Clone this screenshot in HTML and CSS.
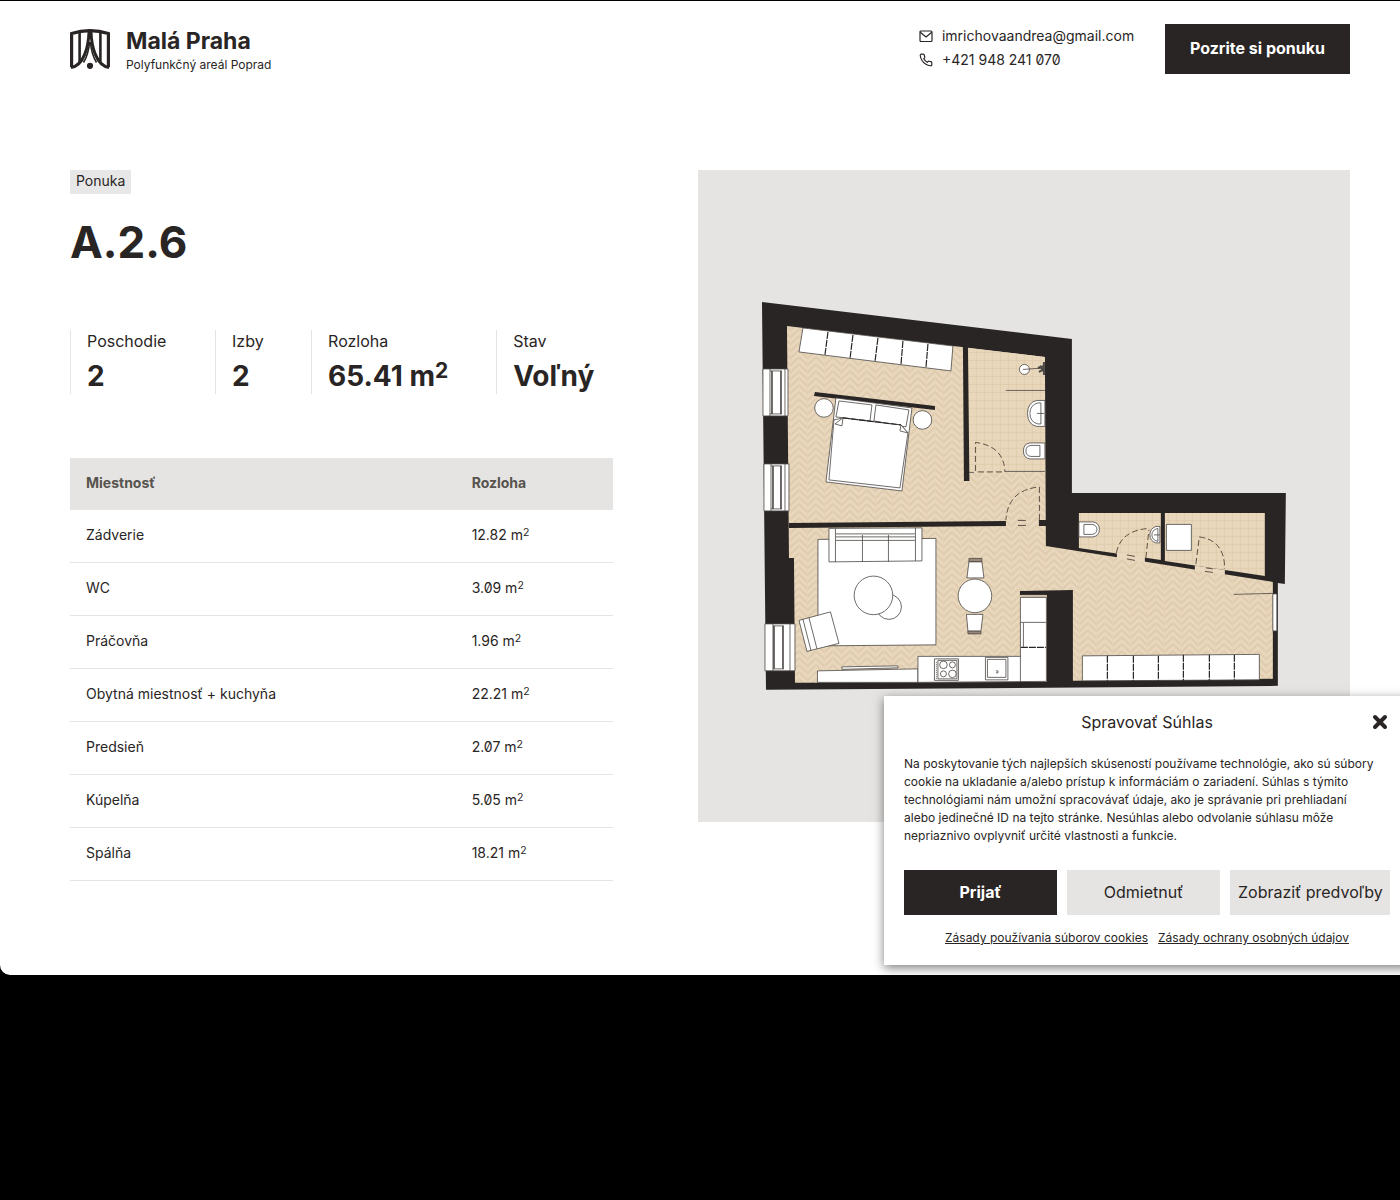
FILE: index.html
```html
<!DOCTYPE html>
<html lang="sk">
<head>
<meta charset="utf-8">
<meta name="viewport" content="width=device-width, initial-scale=1">
<title>A.2.6 – Malá Praha</title>
<link rel="stylesheet" href="styles.css">
</head>
<body>
<div class="page">
  <header class="header">
    <a class="brand" href="#">
      <svg class="brand-logo" viewBox="0 0 40 40" aria-hidden="true">
        <g fill="none" stroke="#292524">
          <path d="M1.6 38.3V4.6Q20-1.4 38.4 4.6v33.7" stroke-width="3.2"/>
          <path d="M9.6 3.5V33M30.4 3.5V33" stroke-width="2.600"/>
          <path d="M19 3C18.500 17 14 37 1 38.400M21 3C21.500 17 26 37 39 38.400" stroke-width="3"/>
          <path d="M19.600 13C18.800 22 17 28 13.500 33.500M20.400 13C21.200 22 23 28 26.500 33.500" stroke-width="1.600"/>
        </g>
        <circle cx="20" cy="36.800" r="3.100" fill="#292524"/>
      </svg>
      <span class="brand-text">
        <strong class="brand-name">Malá Praha</strong>
        <span class="brand-sub">Polyfunkčný areál Poprad</span>
      </span>
    </a>
    <div class="header-side">
      <address class="contact">
        <a class="contact-row" href="mailto:imrichovaandrea@gmail.com">
          <svg class="icon" viewBox="0 0 14 14" aria-hidden="true"><rect x="1" y="2" width="12" height="10.500" rx="1"/><path d="M1.200 3.200 7 8l5.800-4.800"/></svg>
          imrichovaandrea@gmail.com
        </a>
        <a class="contact-row" href="tel:+421948241070">
          <svg class="icon" viewBox="0 0 24 24" aria-hidden="true"><path class="phone" d="M22 16.920v3a2 2 0 0 1-2.180 2 19.790 19.790 0 0 1-8.630-3.070 19.500 19.500 0 0 1-6-6 19.790 19.790 0 0 1-3.070-8.670A2 2 0 0 1 4.110 2h3a2 2 0 0 1 2 1.720c.127.960.361 1.903.7 2.810a2 2 0 0 1-.45 2.110L8.090 9.910a16 16 0 0 0 6 6l1.270-1.270a2 2 0 0 1 2.110-.45c.907.339 1.850.573 2.810.7A2 2 0 0 1 22 16.920z"/></svg>
          +421 948 241 070
        </a>
      </address>
      <button class="btn btn-dark btn-offer" type="button">Pozrite si ponuku</button>
    </div>
  </header>

  <main class="main">
    <section class="details">
      <span class="tag">Ponuka</span>
      <h1 class="title">A.2.6</h1>
      <dl class="stats">
        <div class="stat"><dt>Poschodie</dt><dd>2</dd></div>
        <div class="stat"><dt>Izby</dt><dd>2</dd></div>
        <div class="stat"><dt>Rozloha</dt><dd>65.41 m<sup>2</sup></dd></div>
        <div class="stat"><dt>Stav</dt><dd>Voľný</dd></div>
      </dl>
      <table class="rooms">
        <thead><tr><th scope="col">Miestnosť</th><th scope="col">Rozloha</th></tr></thead>
        <tbody>
          <tr><td>Zádverie</td><td>12.82 m<sup>2</sup></td></tr>
          <tr><td>WC</td><td>3.09 m<sup>2</sup></td></tr>
          <tr><td>Práčovňa</td><td>1.96 m<sup>2</sup></td></tr>
          <tr><td>Obytná miestnosť + kuchyňa</td><td>22.21 m<sup>2</sup></td></tr>
          <tr><td>Predsieň</td><td>2.07 m<sup>2</sup></td></tr>
          <tr><td>Kúpelňa</td><td>5.05 m<sup>2</sup></td></tr>
          <tr><td>Spálňa</td><td>18.21 m<sup>2</sup></td></tr>
        </tbody>
      </table>
    </section>

    <figure class="plan">
      <svg viewBox="698 170 652 652" role="img" aria-label="Pôdorys bytu A.2.6">
        <defs>
          <pattern id="parquet" width="17" height="7" patternUnits="userSpaceOnUse">
            <rect width="17" height="7" fill="#e9d8be"/>
            <path d="M0-7 8.500 1.500 17-7M0 0 8.500 8.500 17 0M0 7 8.500 15.500 17 7" fill="none" stroke="#e0ccae" stroke-width="2.200"/>
            <path d="M8.500 0V7M0 0V7" stroke="#e4d2b6" stroke-width=".8"/>
          </pattern>
          <pattern id="tile" width="8" height="8" patternUnits="userSpaceOnUse">
            <rect width="8" height="8" fill="#e9d7bc"/>
            <path d="M0 .5H8M.5 0V8" stroke="#dcc6a6" stroke-width=".6"/>
          </pattern>
        </defs>
        <!-- walls -->
        <path class="wall" d="M762 302 1072 339V493H1286L1285 584 1278 583V686L766 690Z"/>
        <!-- floors -->
        <path fill="url(#parquet)" d="M787 326 1045 357 1046 546 1273 582V679L1073 681V590L1020 591V595H1047V682L795 683 794 558H789Z"/>
        <path fill="url(#tile)" d="M968 348 1045 357V472H968Z"/>
        <path fill="url(#tile)" d="M1079 513H1161V560L1079 548ZM1165 513H1265V576L1165 561Z"/>
        <path fill="#e9d8be" d="M1117 552.500 1145 557V563L1117 558ZM1195 565.500 1225 570V575L1195 570.500Z"/>
        <path class="wall" d="M963 346H968L969.500 481H964ZM789 523 1006 521V526L789 528ZM1039 520H1047V526H1039ZM815 392 935 406V410L814 396Z"/>
        <path fill="#cfc1ac" d="M1021 595H1046V597H1021Z"/>

        <!-- windows -->
        <g class="obj">
          <path d="M763 369H788V416H763ZM764 464H789V511H764ZM765 624H795V671H765Z"/>
          <path d="M770 369V416M785 369V416M771 464V511M785 464V511M773 624V671M790 624V671"/>
          <path stroke-width="1.600" d="M772 371V414M781 371V414M773 466V509M781 466V509M774 626V669M783 626V669"/>
          <path d="M770 371H782M770 414H782M771 466H782M771 509H782M773 626H784M773 669H784"/>
          <path d="M1273 594H1277V631H1273ZM1234 594.500 1273 593.500"/>
        </g>

        <!-- bedroom -->
        <g class="obj">
          <path d="M803 328 953 346 951 371 799 352Z"/>
          <path class="dash" d="M828 332 825 355M853 335 850 359M878 338 875 362M903 341 901 365M928 344 926 368"/>
          <circle cx="824" cy="408" r="9.300"/><circle cx="922.500" cy="420" r="9.300"/>
          <path d="M836 398 912 408 902 491 826 482Z"/>
          <path d="M839 401 872 405 870 421 836 417ZM876 405 909 410 906 427 874 421Z"/>
          <path d="M834 420 843 418 901 425 908 433 900 488 829 480Z"/>
          <path class="dash" d="M843 418 901 425"/>
          <path d="M835 424 843 418 842 426ZM901 425 908 433 900 431Z"/>
        </g>

        <!-- bathroom -->
        <g class="obj">
          <circle cx="1024.500" cy="369.500" r="5"/><path d="M1023 369.500 1044 368"/>
          <path stroke-width="2" d="M1040 366 1045 373M1044 362V375M1038 368 1044 366M1039 372 1045 369"/>
          <path d="M1006 390.500H1045M969 472.500H974M1005 471.500H1045"/>
          <path d="M1045 400.500H1037Q1028 402 1027.500 413.500 1028 425 1037 426.500H1045Z"/>
          <path d="M1041 403H1038Q1030 405 1030 413.500 1030 422 1038 424H1041ZM1037 413.500H1044"/>
          <path d="M1045 443H1030Q1023.500 444 1023.500 451T1030 459H1045ZM1040 445.500H1031Q1026 446 1026 451T1031 456.500H1040Z"/>
        </g>

        <!-- WC and laundry -->
        <g class="obj">
          <path d="M1079 522H1093Q1099.500 523 1099.500 529.500T1093 537H1079ZM1084 524.500H1092Q1097 525 1097 529.500T1092 534.500H1084Z"/>
          <path d="M1160 526.500H1156Q1150 529 1150 535T1156 543H1160ZM1158 528.500Q1152 530 1152 535T1158 541.500ZM1154 535H1160"/>
          <path d="M1166.500 524.500H1191.500V550.500H1166.500Z"/>
        </g>

        <!-- doors -->
        <g class="door">
          <path d="M975.500 471V442.500Q1004 446 1005 472M978 472H1005M1039.500 520V487Q1008 490 1006 520"/>
          <path d="M1116.500 553Q1121 530 1150 528.500M1146 558 1149 530M1196 564 1199.500 537Q1222 540 1224.500 563V569"/>
          <path class="solid" d="M1018 520.500H1026M1018 525.500H1026M1127 555 1135 556.500M1127 559 1135 560.500M1206 568 1213 569M1205 571.500 1213 572.500"/>
        </g>

        <!-- living room -->
        <g class="obj">
          <path d="M818 539.500 936 538.500V645L818 646Z"/>
          <path d="M829 528.500 922 528V561L829 562ZM835.500 529V562M915.500 528V561M836 534H915M836 537H915M836 540.500H915M862.500 535V562M888.500 535V562"/>
          <circle cx="889" cy="607" r="12.500"/><circle cx="873.500" cy="595.500" r="19.300"/>
          <path d="M799 620.500 830.500 612 839 643.500 807 651.500ZM803 619.500 811 650.500M809 618 817 649"/>
          <path d="M817.500 671 918 669V682.500H817.500ZM842 667 898 666V668L842 669.500Z"/>
          <path fill="#998877" d="M969 558.500H982V562H969ZM968 631H981V634H968Z"/>
          <path d="M969 562H982L984 578H967ZM966.500 614.500H983L981 631H968Z"/>
          <circle cx="975" cy="596" r="16.800"/>
        </g>

        <!-- kitchen and hall wardrobes -->
        <g class="obj">
          <path d="M918 656.500H1020.500V597.500H1046.500V681.500L918 682.500ZM1020.500 656V682M1020.500 622.500H1046M1023.500 623V647"/>
          <path class="dash" d="M1021 647.500H1046"/>
          <path d="M934.500 659H958.500V680.500H934.500ZM938 660.500H957V679H938Z"/>
          <circle cx="943.500" cy="665" r="3.800"/><circle cx="952.500" cy="665" r="3"/><circle cx="943.500" cy="674" r="3"/><circle cx="952.500" cy="674" r="3.800"/>
          <path stroke-dasharray="1 1" d="M936.500 662V679"/>
          <path d="M985.500 657.500H1008V680H985.500ZM987.500 659.500H1006V677.500H987.500ZM996 671H998V673H996"/>
          <path d="M1082.500 656 1259.500 654.500V680L1082.500 681Z"/>
          <path class="dash" d="M1107.500 656V681M1133.500 656V681M1158.500 656V681M1183.500 655V681M1209.500 655V681M1234.500 655V680"/>
        </g>
      </svg>
    </figure>
  </main>

  <section class="consent" role="dialog" aria-labelledby="consent-title">
    <div class="consent-head">
      <h2 class="consent-title" id="consent-title">Spravovať Súhlas</h2>
      <button class="consent-close" type="button" aria-label="Zavrieť">
        <svg viewBox="0 0 14 14" aria-hidden="true"><path d="M2 2 12 12M12 2 2 12"/></svg>
      </button>
    </div>
    <p class="consent-text">Na poskytovanie tých najlepších skúseností používame technológie, ako sú súbory cookie na ukladanie a/alebo prístup k informáciám o zariadení. Súhlas s týmito technológiami nám umožní spracovávať údaje, ako je správanie pri prehliadaní alebo jedinečné ID na tejto stránke. Nesúhlas alebo odvolanie súhlasu môže nepriaznivo ovplyvniť určité vlastnosti a funkcie.</p>
    <div class="consent-actions">
      <button class="btn btn-dark" type="button">Prijať</button>
      <button class="btn btn-light" type="button">Odmietnuť</button>
      <button class="btn btn-light" type="button">Zobraziť predvoľby</button>
    </div>
    <nav class="consent-links">
      <a href="#">Zásady používania súborov cookies</a>
      <a href="#">Zásady ochrany osobných údajov</a>
    </nav>
  </section>
</div>
</body>
</html>
```

FILE: styles.css
```css
* {
  box-sizing: border-box;
}

body {
  margin: 0;
  padding-top: 1px;
  background: #000;
  color: #292524;
  font: 14px/24px Inter, "Noto Sans", sans-serif;
  font-feature-settings: "zero";
}

h1, h2, p, dl, dd, figure {
  margin: 0;
}

a {
  color: inherit;
}

button {
  font: inherit;
  border: 0;
  cursor: pointer;
}

.page {
  position: relative;
  overflow: hidden;
  padding: 23px 50px 94px 70px;
  background: #fff;
  border-bottom-left-radius: 10px;
}

.header {
  display: flex;
  justify-content: space-between;
  align-items: center;
}

.brand {
  display: flex;
  align-items: center;
  gap: 16px;
  text-decoration: none;
}

.brand-logo {
  width: 40px;
  height: 40px;
}

.brand-text {
  display: flex;
  flex-direction: column;
}

.brand-name {
  font-size: 23px;
  line-height: 32px;
}

.brand-sub {
  font-size: 12px;
  line-height: 16px;
}

.header-side {
  display: flex;
  align-items: center;
  gap: 24px;
}

.contact {
  min-width: 222px;
  padding-bottom: 2px;
  font-style: normal;
}

.contact-row {
  display: flex;
  align-items: center;
  gap: 9px;
  text-decoration: none;
}

.icon {
  width: 14px;
  height: 14px;
  fill: none;
  stroke: #292524;
  stroke-width: 1.2;
  stroke-linejoin: round;
}

.phone {
  stroke-width: 2;
}

.btn {
  height: 45px;
  padding: 0 8px 2px;
  font-size: 16px;
  white-space: nowrap;
}

.btn-dark {
  background: #292524;
  color: #fff;
  font-weight: 700;
}

.btn-light {
  background: #e5e4e2;
  color: #292524;
}

.btn-offer {
  height: 50px;
  padding: 0 25px 2px;
}

.main {
  display: grid;
  grid-template-columns: 5fr 6fr;
  gap: 85px;
  align-items: start;
  padding-top: 96px;
}

.tag {
  display: block;
  width: fit-content;
  padding: 0 6px 2px;
  background: #e7e7e7;
  line-height: 22px;
}

.title {
  margin-top: 16px;
  font-size: 44px;
  line-height: 64px;
}

.stats {
  display: grid;
  grid-template-columns: 145fr 96fr 185fr 117fr;
  margin: 56px 0 64px;
}

.stat {
  padding-left: 16px;
  border-left: 1px solid #e5e4e2;
}

.stat dt {
  font-size: 16px;
  line-height: 22px;
}

.stat dd {
  padding-top: 6px;
  font-size: 28px;
  font-weight: 700;
  line-height: 36px;
  white-space: nowrap;
}

sup {
  position: relative;
  top: -8px;
  font-size: 75%;
  line-height: 0;
  vertical-align: baseline;
}

td sup {
  top: -4px;
}

.rooms {
  width: 100%;
  table-layout: fixed;
  border-collapse: separate;
  border-spacing: 0;
}

.rooms th,
.rooms td {
  padding: 13px 16px 15px;
  text-align: left;
}

.rooms th {
  background: #e5e4e2;
  color: #57534e;
  font-weight: 700;
}

.rooms th:first-child {
  width: 71%;
}

.rooms td {
  border-bottom: 1px solid #e5e4e2;
}

.plan {
  background: #e5e4e2;
}

.plan svg {
  display: block;
  width: 100%;
}

.wall {
  fill: #292524;
}

.obj {
  fill: #fff;
  stroke: #4a4644;
  stroke-width: 0.8;
}

.dash {
  stroke: #292524;
  stroke-width: 1.2;
  stroke-dasharray: 7 1;
}

.door {
  fill: none;
  stroke: #5f4f42;
  stroke-width: 1;
  stroke-dasharray: 6 3;
}

.solid {
  stroke-dasharray: none;
}

.consent {
  position: absolute;
  right: -10px;
  bottom: 10px;
  width: 526px;
  padding: 14px 20px 15px;
  background: #fff;
  box-shadow: 0 3px 10px rgba(0, 0, 0, 0.5);
}

.consent-head {
  display: grid;
  grid-template-columns: 20px 1fr 20px;
  align-items: center;
}

.consent-title {
  grid-column: 2;
  font-size: 16px;
  font-weight: 400;
  text-align: center;
}

.consent-close {
  display: flex;
  padding: 3px;
  background: none;
}

.consent-close svg {
  width: 14px;
  height: 14px;
  overflow: visible;
  fill: none;
  stroke: #292524;
  stroke-width: 4;
  stroke-linecap: round;
}

.consent-text {
  margin: 21px 0 25px;
  padding-right: 12px;
  font-size: 12px;
  line-height: 18px;
}

.consent-actions {
  display: grid;
  grid-template-columns: 1fr 1fr 160px;
  gap: 10px;
}

.consent-links {
  display: flex;
  justify-content: center;
  gap: 10px;
  padding: 11px 0 0;
  font-size: 12px;
}
```
